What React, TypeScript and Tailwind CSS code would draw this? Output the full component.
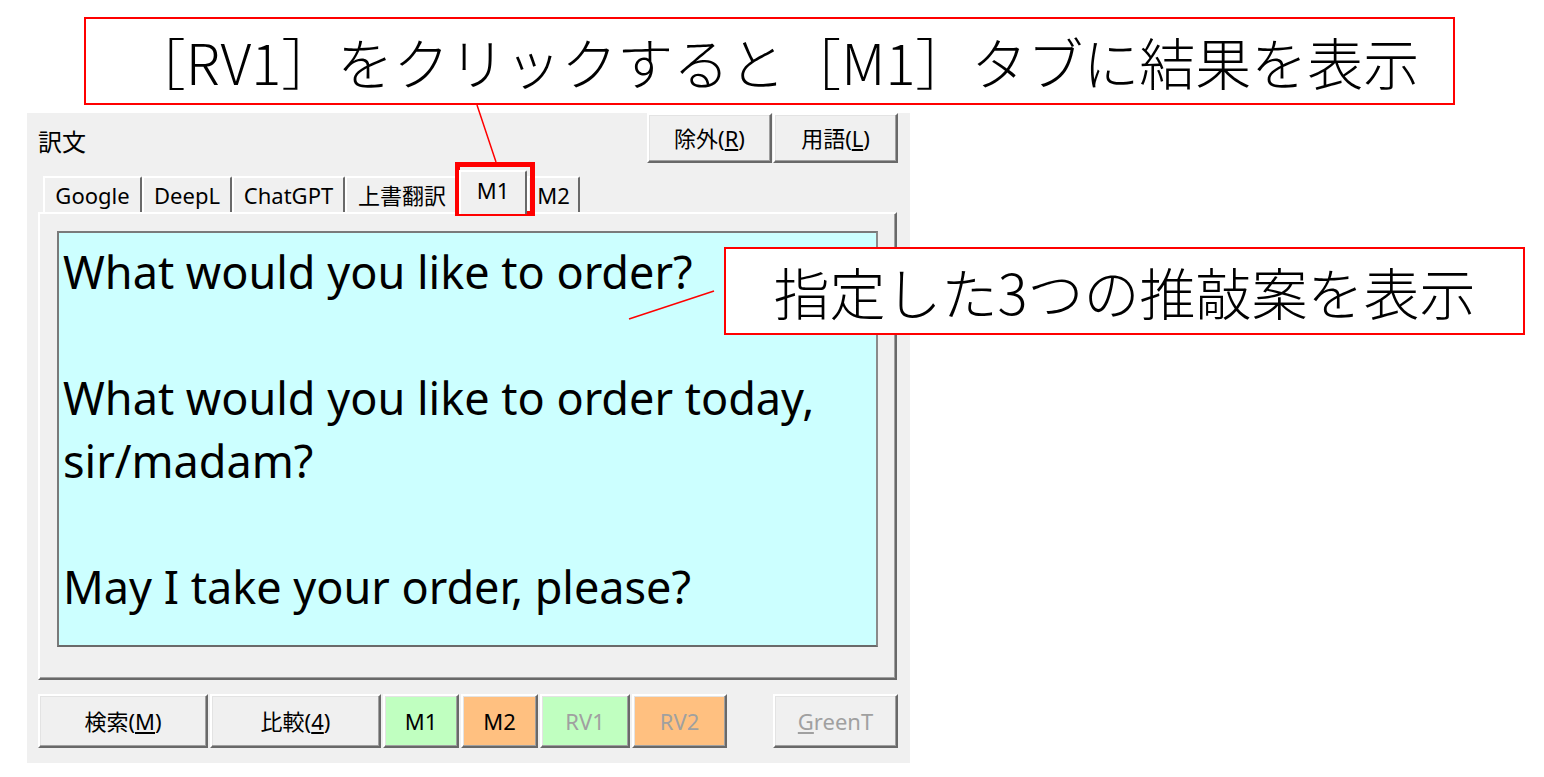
const ui = { fontFamily: "'Noto Sans', 'Noto Sans CJK JP', sans-serif" };
const jp = { fontFamily: "'Noto Sans CJK JP', 'Noto Sans', sans-serif" };

// classic raised 3D edge
const raised =
  "border-t-2 border-l-2 border-r-2 border-b-2 border-t-white border-l-white border-r-[#696969] border-b-[#696969] shadow-[inset_-1px_-1px_0_#a0a0a0,inset_1px_1px_0_#e3e3e3]";

function Btn({
  w,
  bg = "bg-[#f0f0f0]",
  disabled = false,
  children,
}: {
  w: string;
  bg?: string;
  disabled?: boolean;
  children: React.ReactNode;
}) {
  return (
    <div
      className={`${w} h-full ${bg} ${raised} flex items-center justify-center text-[22px] ${
        disabled ? "text-[#a0a0a0]" : "text-black"
      }`}
    >
      {children}
    </div>
  );
}

function Tab({ w, label, active = false }: { w: string; label: string; active?: boolean }) {
  if (active) {
    return (
      <div
        className={`${w} relative z-10 -mb-[2px] h-[44px] bg-[#f0f0f0] border-t-2 border-l-2 border-r-2 border-t-white border-l-white border-r-[#696969] rounded-tr-[2px] flex items-center justify-center pb-[6px] text-[22px]`}
      >
        {label}
      </div>
    );
  }
  return (
    <div
      className={`${w} h-[36px] bg-[#f0f0f0] border-t-2 border-l-2 border-r-2 border-t-white border-l-white border-r-[#696969] rounded-tr-[2px] flex items-center justify-center text-[22px]`}
    >
      {label}
    </div>
  );
}

function Window() {
  return (
    <div className="w-[883px] h-[650px] bg-[#f0f0f0] flex flex-col" style={ui}>
      {/* header */}
      <div className="h-[50px] flex items-start">
        <div className="pl-[11px] pt-[16px] text-[24px] leading-none" style={jp}>
          訳文
        </div>
        <div className="ml-auto mr-[12px] h-full flex gap-[1px]">
          <Btn w="w-[125px]">
            除外(<span className="underline underline-offset-2">R</span>)
          </Btn>
          <Btn w="w-[125px]">
            用語(<span className="underline underline-offset-2">L</span>)
          </Btn>
        </div>
      </div>

      {/* tabs */}
      <div className="mt-[5px] h-[44px] ml-[16px] flex items-end">
        <Tab w="w-[99px]" label="Google" />
        <Tab w="w-[90px]" label="DeepL" />
        <Tab w="w-[113px]" label="ChatGPT" />
        <Tab w="w-[114px]" label="上書翻訳" />
        <Tab w="w-[68px]" label="M1" active />
        <Tab w="w-[53px]" label="M2" />
      </div>

      {/* tab panel */}
      <div
        className={`ml-[11px] w-[859px] h-[468px] bg-[#f0f0f0] border-t-2 border-l-2 border-r-2 border-b-2 border-t-white border-l-white border-r-[#696969] border-b-[#696969] shadow-[inset_-1px_-1px_0_#a0a0a0] pl-[17px] pt-[17px]`}
      >
        <div className="w-[821px] h-[416px] bg-[#ccffff] border-2 border-t-[#7a7a7a] border-l-[#7a7a7a] border-r-[#8a8a8a] border-b-[#6a6a6a] px-[4px] pt-[7px] text-[45px] leading-[63px] text-black">
          <p>What would you like to order?</p>
          <p>&nbsp;</p>
          <p>What would you like to order today,</p>
          <p>sir/madam?</p>
          <p>&nbsp;</p>
          <p>May I take your order, please?</p>
        </div>
      </div>

      {/* bottom buttons */}
      <div className="mt-[14px] h-[54px] ml-[11px] flex gap-[2px]">
        <Btn w="w-[170px]">
          検索(<span className="underline underline-offset-2">M</span>)
        </Btn>
        <Btn w="w-[171px]">
          比較(<span className="underline underline-offset-2">4</span>)
        </Btn>
        <Btn w="w-[76px]" bg="bg-[#c0ffc0]">
          M1
        </Btn>
        <Btn w="w-[77px]" bg="bg-[#ffc080]">
          M2
        </Btn>
        <Btn w="w-[90px]" bg="bg-[#c0ffc0]" disabled>
          RV1
        </Btn>
        <Btn w="w-[95px]" bg="bg-[#ffc080]" disabled>
          RV2
        </Btn>
        <div className="ml-[44px] h-full">
          <Btn w="w-[125px]" disabled>
            <span className="underline underline-offset-2">G</span>reenT
          </Btn>
        </div>
      </div>
    </div>
  );
}

export default function App() {
  return (
    <div className="relative w-[1544px] h-[777px] overflow-hidden bg-white">
      <div className="pl-[27px] pt-[113px]">
        <Window />
      </div>

      {/* callouts */}
      <div
        className="absolute left-[84px] top-[17px] w-[1371px] h-[88px] border-2 border-[#ff0000] bg-white flex items-center justify-center pl-[10px] text-[56px] font-light text-black"
        style={jp}
      >
        ［RV1］をクリックすると［M1］タブに結果を表示
      </div>
      <div
        className="absolute left-[724px] top-[247px] w-[801px] h-[88px] border-2 border-[#ff0000] bg-white flex items-center justify-center text-[56px] font-light text-black"
        style={jp}
      >
        指定した3つの推敲案を表示
      </div>

      {/* highlight around M1 tab */}
      <div className="absolute left-[455px] top-[162px] w-[80px] h-[54px] border-[5px] border-[#ff0000]" />

      {/* leader lines */}
      <svg className="absolute inset-0 pointer-events-none" width="1544" height="777">
        <line x1="477" y1="105" x2="496" y2="162" stroke="#ff0000" strokeWidth="1.5" />
        <line x1="714" y1="291" x2="629" y2="319" stroke="#ff0000" strokeWidth="1.5" />
      </svg>
    </div>
  );
}
